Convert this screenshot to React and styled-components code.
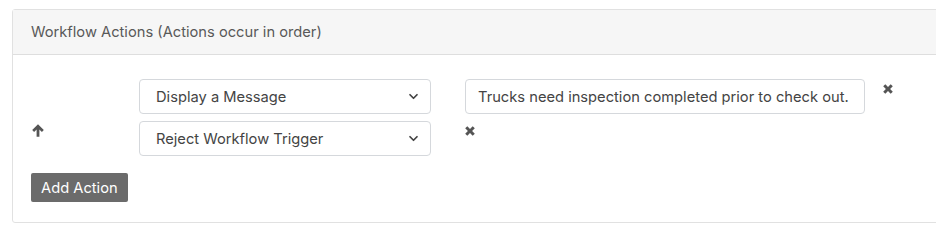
import React from 'react';
import styled, { createGlobalStyle } from 'styled-components';

const GlobalStyle = createGlobalStyle`
  body {
    margin: 0;
    background: #fff;
    font-family: Inter, "Liberation Sans", Arial, sans-serif;
  }
`;

const Page = styled.div`
  width: 936px;
  height: 240px;
  padding: 9px 0 0 12px;
  box-sizing: border-box;
  overflow: hidden;
`;

const Card = styled.div`
  width: 940px;
  border: 1px solid #e1e1e1;
  border-radius: 3px;
  background: #fff;
`;

const CardHeader = styled.div`
  height: 44px;
  display: flex;
  align-items: center;
  padding: 0 18px;
  background: #f6f6f6;
  border-bottom: 1px solid #dedede;
  color: #595959;
  font-size: 14.7px;
`;

const CardBody = styled.div`
  padding: 24px 18px 20px;
`;

const ActionList = styled.div`
  display: flex;
  flex-direction: column;
  gap: 7px;
`;

const ActionRow = styled.div`
  display: flex;
  align-items: flex-start;
`;

const MoveCell = styled.div`
  flex: none;
  width: 108px;
  height: 35px;
  display: flex;
  align-items: flex-start;
  padding: 3px 0 0 1px;
  box-sizing: border-box;
  color: #555;
`;

const Select = styled.select`
  width: 292px;
  height: 35px;
  padding: 0 32px 0 16px;
  border: 1px solid #d5d8dc;
  border-radius: 4px;
  background: #fff
    url("data:image/svg+xml,%3Csvg xmlns='http://www.w3.org/2000/svg' width='12' height='8' viewBox='0 0 12 8'%3E%3Cpath d='M2 2l4 4 4-4' fill='none' stroke='%23444' stroke-width='2' stroke-linecap='round' stroke-linejoin='round'/%3E%3C/svg%3E")
    no-repeat right 11px center / 11px 7px;
  appearance: none;
  color: #444;
  font-family: inherit;
  font-size: 14.7px;
`;

const TextInput = styled.input`
  width: 400px;
  height: 35px;
  margin-left: 34px;
  padding: 0 12px;
  box-sizing: border-box;
  border: 1px solid #d5d8dc;
  border-radius: 4px;
  color: #444;
  font-family: inherit;
  font-size: 14.7px;
`;

const RemoveButton = styled.button`
  border: 0;
  background: none;
  padding: 0;
  margin: ${(p) => p.$offset};
  width: 12px;
  height: 12px;
  display: flex;
  color: #555;
  cursor: pointer;
`;

const AddButton = styled.button`
  margin-top: 17px;
  height: 29px;
  padding: 0 10px;
  border: 0;
  border-radius: 2px;
  background: #6b6b6b;
  color: #fff;
  font-family: inherit;
  font-size: 14.7px;
`;

const ArrowUp = () => (
  <svg width="12" height="13" viewBox="0 0 12 13">
    <path d="M6 0.3 L11.8 6.1 L9.9 8 L7.4 5.5 V12.7 H4.6 V5.5 L2.1 8 L0.2 6.1 Z" fill="currentColor" />
  </svg>
);

const Times = () => (
  <svg width="12" height="12" viewBox="0 0 12 12">
    <path d="M1.2 3.3 L3.3 1.2 L6 3.9 L8.7 1.2 L10.8 3.3 L8.1 6 L10.8 8.7 L8.7 10.8 L6 8.1 L3.3 10.8 L1.2 8.7 L3.9 6 Z" fill="currentColor" />
  </svg>
);

export default function App() {
  return (
    <Page>
      <GlobalStyle />
      <Card>
        <CardHeader>Workflow Actions (Actions occur in order)</CardHeader>
        <CardBody>
          <ActionList>
            <ActionRow>
              <MoveCell />
              <Select defaultValue="message">
                <option value="message">Display a Message</option>
                <option value="reject">Reject Workflow Trigger</option>
              </Select>
              <TextInput defaultValue="Trucks need inspection completed prior to check out." />
              <RemoveButton $offset="4px 0 0 17px" aria-label="Remove">
                <Times />
              </RemoveButton>
            </ActionRow>
            <ActionRow>
              <MoveCell>
                <ArrowUp />
              </MoveCell>
              <Select defaultValue="reject">
                <option value="message">Display a Message</option>
                <option value="reject">Reject Workflow Trigger</option>
              </Select>
              <RemoveButton $offset="4px 0 0 33px" aria-label="Remove">
                <Times />
              </RemoveButton>
            </ActionRow>
          </ActionList>
          <AddButton>Add Action</AddButton>
        </CardBody>
      </Card>
    </Page>
  );
}
